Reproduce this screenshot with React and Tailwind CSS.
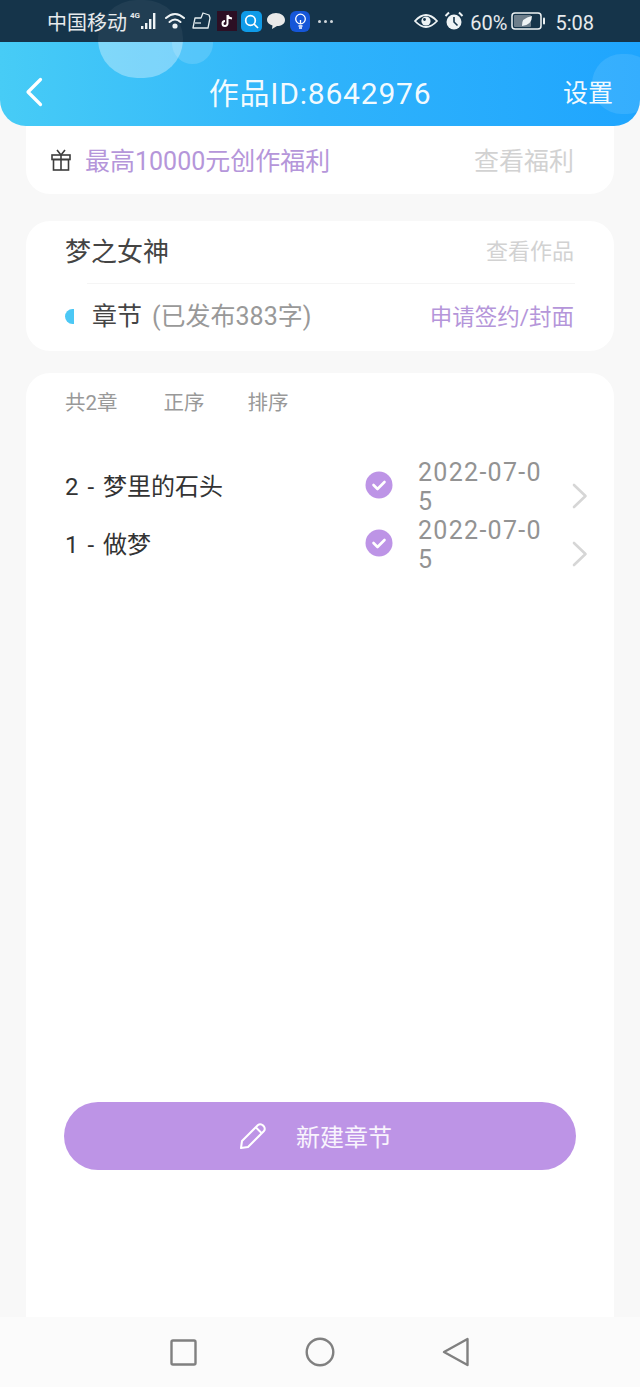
import React from "react";

const font = { fontFamily: 'Roboto, "Noto Sans CJK SC", "Noto Sans", sans-serif' };

function Chevron() {
  return (
    <svg width="16" height="26" viewBox="0 0 16 26" fill="none" className="shrink-0">
      <path d="M2 2 L13.5 13 L2 24" stroke="#d6d6d6" strokeWidth="2.6" strokeLinecap="round" strokeLinejoin="round" />
    </svg>
  );
}

function Check() {
  return (
    <svg width="28" height="28" viewBox="0 0 28 28" className="shrink-0">
      <circle cx="14" cy="14" r="13.5" fill="#bd94e6" />
      <path d="M8.5 14 L12.5 18 L19.5 11" stroke="#fff" strokeWidth="2.6" fill="none" strokeLinecap="round" strokeLinejoin="round" />
    </svg>
  );
}

function Row({ title }) {
  return (
    <div className="flex items-center h-[58px] -mr-[13px]">
      <div className="w-[300px] shrink-0 pt-[4px] text-[24px] leading-[30px] text-[#333333] [word-spacing:3px]">{title}</div>
      <Check />
      <div className="ml-[25px] w-[130px] shrink-0 pt-[4px] text-[25px] leading-[29px] text-[#939393] break-all tracking-[1.3px]">2022-07-05</div>
      <div className="ml-[24px] pt-[22px] shrink-0"><Chevron /></div>
    </div>
  );
}

function StatusBar() {
  return (
    <div className="h-[42px] bg-[#15344a] flex items-center text-white/90 relative z-10 shrink-0">
      <div className="ml-[47px] flex items-center">
        <span className="pt-[3px] text-[20px] leading-[24px]">中国移动</span>
        <span className="text-[8px] leading-[8px] font-bold ml-[3px] -mt-[11px]">4G</span>
        <svg width="22" height="20" viewBox="0 0 20 20" className="-ml-[2px]">
          <g fill="#eef3f5">
            <rect x="2" y="15" width="2.4" height="3" />
            <rect x="6" y="12" width="2.4" height="6" />
            <rect x="10" y="8" width="2.4" height="10" />
            <rect x="14" y="2" width="2.4" height="16" />
          </g>
        </svg>
        <svg width="24" height="22" viewBox="0 0 24 22" className="ml-[4px]" fill="none" stroke="#eef3f5" strokeWidth="2" strokeLinecap="round">
          <path d="M2 8 Q11 0 20 8" />
          <path d="M5.5 12 Q11 7 16.5 12" />
          <circle cx="11" cy="16" r="1.6" fill="#eef3f5" />
        </svg>
        <svg width="22" height="22" viewBox="0 0 22 22" className="ml-[3px]" fill="none" stroke="#e4ecef" strokeWidth="1.3" strokeLinejoin="round">
          <path d="M4 8 H10 L12 3 L18 5 L19 8 L17 18 H2 Z" />
          <path d="M4 13 H10" />
        </svg>
        <div className="ml-[4px] w-[20px] h-[20px] bg-[#2c0f24] flex items-center justify-center">
          <svg width="12" height="14" viewBox="0 0 12 14"><path d="M6.5 1 V9.5 A2.5 2.5 0 1 1 4 7 M6.5 1 Q7.5 4 11 4.5" stroke="#fff" strokeWidth="2" fill="none" /></svg>
        </div>
        <div className="ml-[4px] w-[21px] h-[21px] rounded-[5px] bg-[#0f9be8] flex items-center justify-center">
          <svg width="15" height="15" viewBox="0 0 15 15" fill="none" stroke="#fff" strokeWidth="1.7"><circle cx="6.5" cy="6.5" r="4.8" /><path d="M10 10 L14 14" /></svg>
        </div>
        <svg width="20" height="18" viewBox="0 0 20 18" className="ml-[4px]"><path d="M10 1 C15 1 19 4 19 8 C19 12 15 14 11 14 L6 17 L6.5 13.5 C3 12.5 1 10.5 1 8 C1 4 5 1 10 1 Z" fill="#e9e9e9" /></svg>
        <div className="ml-[4px] w-[20px] h-[21px] rounded-[6px] bg-[#1556d8] flex items-center justify-center">
          <svg width="13" height="16" viewBox="0 0 13 16" fill="none" stroke="#fff" strokeWidth="1.3"><circle cx="6.5" cy="6" r="4.8" /><path d="M4.5 13 H8.5 M5 15 H8 M6.5 7 V11" /></svg>
        </div>
        <div className="ml-[8px] flex gap-[3px]">
          <span className="w-[3px] h-[3px] rounded-full bg-white/80" />
          <span className="w-[3px] h-[3px] rounded-full bg-white/80" />
          <span className="w-[3px] h-[3px] rounded-full bg-white/80" />
        </div>
      </div>
      <div className="ml-auto mr-[46px] flex items-center">
        <svg width="24" height="16" viewBox="0 0 24 16">
          <path d="M1 8 Q12 -4 23 8 Q12 20 1 8 Z" fill="none" stroke="#eef3f5" strokeWidth="1.8" />
          <circle cx="12" cy="8" r="4.6" fill="#eef3f5" />
          <circle cx="10.5" cy="6.5" r="1.4" fill="#15344a" />
        </svg>
        <svg width="20" height="20" viewBox="0 0 20 20" className="ml-[6px]">
          <circle cx="10" cy="11" r="7.5" fill="#eef3f5" />
          <path d="M10 6 V11 L13.5 14.5" stroke="#15344a" strokeWidth="1.6" fill="none" />
          <path d="M1.5 5 L5 1.5 M18.5 5 L15 1.5" stroke="#eef3f5" strokeWidth="2" />
        </svg>
        <span className="ml-[6px] pt-[3px] text-[20px] leading-[24px]">60%</span>
        <svg width="34" height="18" viewBox="0 0 34 18" className="ml-[4px]">
          <rect x="1" y="1" width="29" height="16" rx="3" fill="none" stroke="#eef3f5" strokeWidth="1.5" />
          <rect x="3" y="3" width="17" height="12" rx="1" fill="#6d7e8b" />
          <rect x="32" y="5.5" width="2" height="7" rx="1" fill="#eef3f5" />
          <path d="M11 14 Q10 6 21 4 Q21 13 11 14 Z" fill="#eef3f5" />
        </svg>
        <span className="ml-[10px] pt-[3px] text-[20px] leading-[24px]">5:08</span>
      </div>
    </div>
  );
}

export default function App() {
  return (
    <div style={font} className="w-[640px] h-[1387px] bg-[#f8f8f8] flex flex-col overflow-hidden relative">
      <StatusBar />
      <span className="absolute z-20 left-[98px] top-0 w-[85px] h-[78px] rounded-full bg-white/5" />

      <header className="relative z-10 h-[84px] shrink-0 rounded-b-[26px] bg-gradient-to-r from-[#47ccf6] via-[#2fb3fb] to-[#1fa5fe] overflow-hidden flex items-center pt-[16px]">
        <span className="absolute left-[98px] -top-[42px] w-[85px] h-[78px] rounded-full bg-white/30" />
        <span className="absolute left-[172px] -top-[21px] w-[41px] h-[43px] rounded-full bg-white/15" />
        <span className="absolute left-[592px] top-[12px] w-[64px] h-[60px] rounded-full bg-white/10" />
        <svg width="18" height="30" viewBox="0 0 18 30" className="ml-[25px] relative">
          <path d="M15.5 2.5 L3 15 L15.5 27.5" stroke="#fff" strokeWidth="3.2" fill="none" strokeLinecap="round" strokeLinejoin="round" />
        </svg>
        <h1 className="absolute left-0 right-0 pt-[3px] text-center text-[30px] leading-[36px] font-normal text-white/95 tracking-[0.8px]">作品ID:8642976</h1>
        <span className="ml-auto mr-[27px] pt-[3px] relative text-[25px] leading-[32px] text-white/95">设置</span>
      </header>

      <section className="-mt-[8px] mx-[26px] h-[76px] shrink-0 bg-white rounded-b-[24px] flex items-center pl-[24px] pr-[40px] pt-[8px]">
        <svg width="22" height="24" viewBox="0 0 22 24" fill="none" stroke="#3d3d3d" strokeWidth="1.6">
          <rect x="2" y="7" width="18" height="4.5" />
          <rect x="3.5" y="11.5" width="15" height="10.5" />
          <path d="M11 7 V22" />
          <path d="M11 7 L7 2 M11 7 L15 2" />
        </svg>
        <span className="ml-[13px] pt-[4px] text-[25px] leading-[32px] text-[#b596da]">最高10000元创作福利</span>
        <span className="ml-auto pt-[4px] text-[25px] leading-[32px] text-[#d2d2d2]">查看福利</span>
      </section>

      <section className="mt-[27px] mx-[26px] h-[130px] shrink-0 bg-white rounded-[24px] px-[39px]">
        <div className="h-[62px] flex items-center justify-between">
          <span className="text-[26px] leading-[32px] text-[#444444]">梦之女神</span>
          <span className="text-[22px] leading-[30px] text-[#d2d2d2] mr-[1px]">查看作品</span>
        </div>
        <div className="ml-[22px] h-px bg-[#f5f5f5]" />
        <div className="h-[67px] flex items-center pb-[2px]">
          <span className="w-[9px] h-[15px] rounded-l-full bg-[#4cc8f5]" />
          <span className="ml-[18px] text-[25px] leading-[32px] text-[#444444]">章节</span>
          <span className="ml-[10px] text-[25px] leading-[32px] text-[#999999]">(已发布383字)</span>
          <span className="ml-auto mr-[1px] text-[22.5px] leading-[30px] text-[#b596da]">申请签约/封面</span>
        </div>
      </section>

      <main className="mt-[22px] mx-[26px] flex-1 bg-white rounded-t-[24px] px-[39px] flex flex-col">
        <div className="h-[60px] flex items-center text-[20.5px] leading-[26px] text-[#999999]">
          <span>共2章</span>
          <span className="ml-[46px]">正序</span>
          <span className="ml-[43px]">排序</span>
        </div>
        <div className="mt-[23px] flex flex-col">
          <Row title="2 - 梦里的石头" />
          <Row title="1 - 做梦" />
        </div>
        <button className="mt-auto mb-[148px] -mx-px h-[68px] rounded-full bg-[#bd94e6] flex items-center justify-center text-white/90">
          <svg width="30" height="30" viewBox="0 0 30 30" fill="none" stroke="#fff" strokeWidth="2" strokeLinejoin="round" className="ml-[-10px]">
            <path d="M3 27 L4 20 L20 4 Q22 2.5 24.5 4 L26 5.5 Q27.5 8 26 10 L10 26 Z" />
            <path d="M18 6.5 L23.5 12" />
          </svg>
          <span className="ml-[28px] pt-[4px] text-[24px] leading-[32px]">新建章节</span>
        </button>
      </main>

      <nav className="h-[70px] shrink-0 bg-[#fbfbfb] flex items-center -mt-px">
        <svg width="27" height="27" viewBox="0 0 27 27" className="ml-[170px]" fill="none" stroke="#808080" strokeWidth="2.4">
          <rect x="1.5" y="1.5" width="24" height="24" rx="1.5" />
        </svg>
        <svg width="30" height="30" viewBox="0 0 30 30" className="ml-[108px]" fill="none" stroke="#808080" strokeWidth="2.4">
          <circle cx="15" cy="15" r="13.3" />
        </svg>
        <svg width="28" height="30" viewBox="0 0 28 30" className="ml-[107px]" fill="none" stroke="#808080" strokeWidth="2.4" strokeLinejoin="round">
          <path d="M2 15 L25.5 2 V28 Z" />
        </svg>
      </nav>
    </div>
  );
}
